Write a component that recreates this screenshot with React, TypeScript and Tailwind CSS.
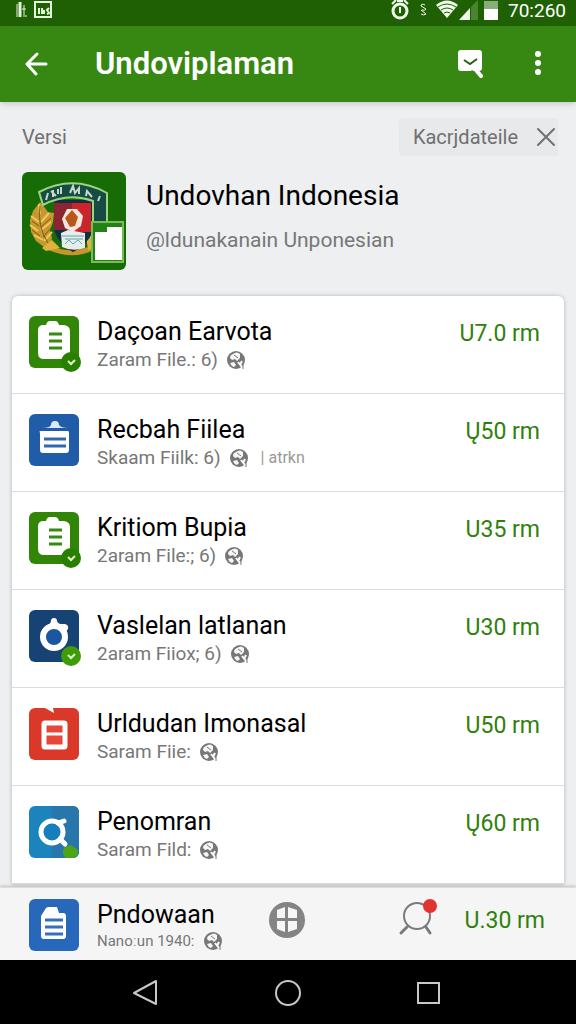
import type { ReactNode } from 'react'

const CLIPBOARD = (
  <>
    <path fill="#fff" d="M13 9h4q1-4 4-4h5q3 0 4 4h5q6 1 6 6v22q0 6-6 6H15q-6 0-6-6V14q0-4 4-5z" />
    <path stroke="#358a10" strokeWidth="3" d="M20 18h13M20 25h13M20 32h13" />
  </>
)

interface Item {
  title: string
  meta: string
  extra?: string
  price: string
  tile: string
  badge?: string
  art: ReactNode
}

const items: Item[] = [
  { title: 'Daçoan Earvota', meta: 'Zaram File.: 6)', price: 'U7.0 rm', tile: 'bg-[#318608]', badge: 'bg-[#298000]', art: CLIPBOARD },
  {
    title: 'Recbah Fiilea',
    meta: 'Skaam Fiilk: 6)',
    extra: '| atrkn',
    price: 'Ų50 rm',
    tile: 'bg-[#215ca8]',
    art: (
      <>
        <path fill="#d9e8fa" d="M13 14q8 0 9-3 0-4 4-4t4 4q2 3 9 3z" />
        <path fill="#fff" d="M11 17h28q1 0 1 2v17q0 3-3 3H14q-3 0-3-3V19q-1-2 0-2z" />
        <path stroke="#3168b1" strokeWidth="3" d="M15 25h22M15 32h22" />
      </>
    ),
  },
  { title: 'Kritiom Bupia', meta: '2aram File:; 6)', price: 'U35 rm', tile: 'bg-[#318608]', badge: 'bg-[#298000]', art: CLIPBOARD },
  {
    title: 'Vaslelan latlanan',
    meta: '2aram Fiiox; 6)',
    price: 'U30 rm',
    tile: 'bg-[#164274]',
    badge: 'bg-[#409b08]',
    art: (
      <>
        <circle cx="25" cy="27" r="11" fill="#1b57a0" stroke="#fff" strokeWidth="6" />
        <path fill="#fff" d="M17 17q4-2 5-6 0-3 3-3t3 3q1 3 4 3h4q4 1 3 5-2 4-5 3l-8-4z" />
      </>
    ),
  },
  {
    title: 'Urldudan Imonasal',
    meta: 'Saram Fiie:',
    price: 'U50 rm',
    tile: 'bg-[#da3828]',
    art: (
      <>
        <path fill="#fff" d="M16 0h8l1 5z" />
        <rect x="15" y="15" width="21" height="24" rx="1" fill="#e84636" stroke="#fff" strokeWidth="5" />
        <path stroke="#fff" strokeWidth="3" d="M15 26h21" />
      </>
    ),
  },
  {
    title: 'Penomran',
    meta: 'Saram Fild:',
    price: 'Ų60 rm',
    tile: 'bg-[#1c83bd]',
    art: (
      <>
        <path fill="#2876ac" d="M23 0h27v52H23z" />
        <path fill="#4da414" d="m36 41 6-2 7 5v4l-3 4h-9q-4-3-3-8z" />
        <circle cx="23" cy="26" r="11" fill="#157ebd" stroke="#fff" strokeWidth="5" />
        <path stroke="#fff" strokeWidth="5" strokeLinecap="round" d="m29 17 6-2M31 33l5 5" />
      </>
    ),
  },
]

function Tile({ color, badge, children }: { color: string; badge?: string; children: ReactNode }) {
  return (
    <div className={`relative h-[52px] w-[50px] shrink-0 rounded-md ${color}`}>
      <svg viewBox="0 0 50 52" className="h-full w-full rounded-md" fill="none" aria-hidden="true">
        {children}
      </svg>
      {badge && (
        <span className={`absolute -bottom-1 -right-0.5 flex h-5 w-5 items-center justify-center rounded-full ${badge}`}>
          <svg viewBox="0 0 20 20" className="h-5 w-5" fill="none" stroke="#dcf6c8" strokeWidth="2" aria-hidden="true">
            <path d="m7 9 3 3 4-4" />
          </svg>
        </span>
      )}
    </div>
  )
}

function Globe() {
  return (
    <svg viewBox="0 0 20 20" className="h-5 w-5 shrink-0" fill="none" aria-hidden="true">
      <circle cx="10" cy="10" r="9" fill="#777" />
      <path fill="#f6f6f6" d="M7 4q4-3 7 0v4l-3 3-2-2-3 1-2-2q0-3 3-4zM4 13l4-1 2 3-2 2q-3-1-4-4z" />
      <path stroke="#fff" strokeWidth="2" d="m12 12 4 5M16 11l-2 4" />
      <path stroke="#777" strokeWidth="1" d="m8 5 4 3M17 14v5" />
    </svg>
  )
}

function StatusBar() {
  return (
    <div className="flex h-[26px] items-start bg-[#206004] pl-4 pr-2.5 text-white">
      <svg viewBox="0 0 38 20" className="h-5 w-[38px]" fill="none" stroke="#e5f5dc" aria-hidden="true">
        <path strokeWidth="1" d="M1 4v13M8 5v12M6 9h4M10 15v2" />
        <path strokeWidth="3" d="M4 2v15" />
        <path strokeWidth="2" d="M19 2h16v15H19z" />
        <path strokeWidth="2" d="M23 8v6M26 8v6M28 10v4M33 8l-2 2 2 3-2 1" />
      </svg>
      <div className="ml-auto flex items-center">
        <svg viewBox="0 0 110 22" className="h-[22px] w-[110px]" fill="none" stroke="#f2faed" aria-hidden="true">
          <circle cx="12" cy="11" r="7" strokeWidth="3" />
          <path strokeWidth="2" d="M4 4 8 0M16 0l4 4M12 7v6M9 1h6" />
          <path strokeWidth="1" d="M37 5q-4-2-4 1l5 3q-1 2-4 1M33 10l5 4q-2 2-5 0" />
          <path fill="#f2faed" stroke="none" d="M48 5q11-9 22 0L59 18z" />
          <path stroke="#206004" strokeWidth="1" d="M50 7q9-6 18 0M53 10q6-4 12 0M56 13q3-2 6 0" />
          <path fill="#f2faed" stroke="none" d="M71 20 82 8v12z" />
          <path fill="#47862e" stroke="none" d="M83 7 90 0v20h-7z" />
          <path fill="#88ad79" stroke="none" d="M96 1h14v8H96z" />
          <path fill="#fff" stroke="none" d="M96 9h14v11H96z" />
        </svg>
        <span className="ml-2.5 text-[19px] leading-[22px]">70:260</span>
      </div>
    </div>
  )
}

function AppBar() {
  return (
    <header className="z-10 flex h-[76px] items-center bg-[#378812] pl-6 pr-7 text-white shadow-md">
      <button type="button" aria-label="Back" className="h-6 w-6">
        <svg viewBox="0 0 24 24" fill="none" stroke="currentColor" strokeWidth="3" strokeLinecap="round" strokeLinejoin="round">
          <path d="M13 2 3 12l9 10M4 12h18" />
        </svg>
      </button>
      <h1 className="ml-[47px] text-[31px] font-semibold leading-9">Undoviplaman</h1>
      <button type="button" aria-label="Review" className="ml-auto h-7 w-7">
        <svg viewBox="0 0 28 28" fill="none">
          <path fill="#fff" d="M5 0h18q3 0 3 3v15q0 3-3 3H5q-3 0-3-3V3q0-3 3-3z" />
          <path stroke="#378812" strokeWidth="3" d="m15 21 5 5" />
          <path stroke="#fff" strokeWidth="4" strokeLinecap="round" d="m20 20 5 6" />
          <path stroke="#275e14" strokeWidth="2" d="m8 10 6 4 7-5" />
        </svg>
      </button>
      <button type="button" aria-label="More options" className="ml-10 h-7 w-6">
        <svg viewBox="0 0 24 28" fill="currentColor">
          <circle cx="14" cy="4" r="3" />
          <circle cx="14" cy="13" r="3" />
          <circle cx="14" cy="22" r="3" />
        </svg>
      </button>
    </header>
  )
}

function Emblem() {
  return (
    <svg viewBox="0 0 104 98" className="h-[98px] w-[104px] shrink-0 rounded-md" fill="none" aria-hidden="true">
      <path fill="#176c05" d="M0 0h104v98H0z" />
      {/* wreath */}
      <path fill="#c7982f" d="m18 30 5 6 3 4 6 1-1 9-3 8 2 8-2 8-6 1-8-6-5-9-1-12 3-9z" />
      <path stroke="#f0c95c" strokeWidth="2" d="m17 32 1 10M9 44l8 6M8 53l8 6M12 63l9 5M27 41l-8 9M29 50l-10 8M30 60l-8 9" />
      <path stroke="#7a5f14" strokeWidth="1" d="M18 34q-3 20 8 37M10 49l7 5M10 58l8 6M29 46l-10 9M29 56l-8 9" />
      <path stroke="#c7952a" strokeWidth="5" strokeLinecap="round" d="M28 76q24 10 44-1" />
      <path fill="#dfb33d" d="m20 76 10-8 8 8-14 3zM64 64l6-3 5 14-9 3z" />
      {/* shield */}
      <path fill="#102f43" d="M32 28h39v32q-8 15-20 20-14-7-19-22z" />
      <path fill="#8d2432" d="M32 31h18v27H32z" />
      <path fill="#cb242b" d="M50 31h19v29H50z" />
      <path fill="#f3e6db" d="M45 37h10l6 7-2 10-8 6-8-4-3-9z" />
      <path fill="#b85719" d="m50 38 6 7-3 9-5 1-5-9z" />
      <path fill="#e8edea" d="m39 61 7-3 17 3v15q-12 4-23-1z" />
      <path stroke="#5aa8ad" strokeWidth="1" d="M40 64h22M43 67h18M43 72l4-4 4 4 5-4 4 4" />
      {/* ribbon */}
      <path fill="#174c45" stroke="#9bd57c" strokeWidth="2" d="M17 20q34-18 68 1v31H71V29Q46 20 21 33z" />
      <path stroke="#c4d9ce" strokeWidth="2" d="m24 28 2-7M31 25v-7M29 19l5 5M39 22v-7M36 17v5M48 21l3-7 2 7 4-5v6M64 24l1-5 5 6M76 29l2-5" />
      <path fill="#268018" stroke="#75bd57" strokeWidth="2" d="M70 50h31v40H70z" />
      <path fill="#fff" d="M73 60h12v-5h15v33H73z" />
    </svg>
  )
}

function ProfileHeader() {
  return (
    <section className="pb-[26px] pl-[22px] pr-[18px] pt-4">
      <div className="flex items-center justify-between text-xl leading-[38px] text-[#707070]">
        <span>Versi</span>
        <div className="flex items-center rounded bg-[#e8e9ea] pl-3.5">
          <button type="button">Kacrjdateile</button>
          <button type="button" aria-label="Clear" className="ml-4 h-6 w-6">
            <svg viewBox="0 0 24 24" fill="none" stroke="currentColor" strokeWidth="2" strokeLinecap="round">
              <path d="m4 4 16 16M20 4 4 20" />
            </svg>
          </button>
        </div>
      </div>
      <div className="mt-4 flex">
        <Emblem />
        <div className="ml-5 pt-1.5">
          <h2 className="whitespace-nowrap text-[28px] leading-9 text-black">Undovhan Indonesia</h2>
          <p className="mt-3 whitespace-nowrap text-[21px] leading-7 text-[#777]">@ldunakanain Unponesian</p>
        </div>
      </div>
    </section>
  )
}

function ItemRow({ item }: { item: Item }) {
  return (
    <li className="flex items-start border-b border-[#dcdcdc] pb-[21px] pl-[17px] pr-6 pt-5">
      <Tile color={item.tile} badge={item.badge}>
        {item.art}
      </Tile>
      <div className="ml-[18px] min-w-0 flex-1">
        <h3 className="whitespace-nowrap text-[25px] leading-8 text-black">{item.title}</h3>
        <p className="flex items-center gap-2 whitespace-nowrap text-[19px] leading-6 text-[#777]">
          {item.meta}
          <Globe />
          {item.extra && <span className="ml-1 text-base leading-6 text-[#999]">{item.extra}</span>}
        </p>
      </div>
      <span className="whitespace-nowrap text-[23px] leading-9 text-[#2f800c]">{item.price}</span>
    </li>
  )
}

function BottomBar() {
  return (
    <footer className="z-10 flex h-[73px] items-start border-t border-[#ddd] bg-[#f5f5f6] pl-[29px] pr-[31px] pt-[11px] shadow-[0_-1px_3px_rgba(0,0,0,0.2)]">
      <Tile color="bg-[#2868ba]">
        <path fill="#fff" d="m12 17 5-8q1-1 3-1h8l2 6h4q3 0 3 3v20q0 3-3 3H15q-3 0-3-3z" />
        <path stroke="#3470bc" strokeWidth="3" d="M16 21h18M16 28h18M16 35h18" />
      </Tile>
      <div className="ml-[18px] w-[171px]">
        <h3 className="whitespace-nowrap text-[25px] leading-8 text-black">Pndowaan</h3>
        <p className="flex items-center gap-2 whitespace-nowrap text-[15px] leading-5 text-[#777]">
          Nanoːun 1940:
          <Globe />
        </p>
      </div>
      <button type="button" aria-label="Add" className="mt-0.5 h-[38px] w-[38px]">
        <svg viewBox="0 0 38 38" fill="none">
          <circle cx="19" cy="19" r="18" fill="#848484" />
          <path fill="#f6f6f6" d="m9 9 8-3v11H9zM20 6l9 3v8h-9zM9 20h8v11l-8-3zM20 20h9v8l-9 3z" />
        </svg>
      </button>
      <button type="button" aria-label="Search" className="ml-auto h-10 w-10">
        <svg viewBox="0 0 40 40" fill="none" stroke="#7a7a7a">
          <circle cx="20" cy="17" r="13" strokeWidth="2" />
          <path strokeWidth="3" strokeLinecap="round" d="m10 28-6 6M29 28l4 6" />
          <circle cx="33" cy="7" r="7" fill="#e13431" stroke="none" />
        </svg>
      </button>
      <span className="ml-7 whitespace-nowrap text-[23px] leading-[44px] text-[#2f800c]">U.30 rm</span>
    </footer>
  )
}

function NavBar() {
  return (
    <nav className="flex h-16 items-center justify-center gap-[113px] bg-black text-[#c8c8c8]">
      <button type="button" aria-label="Back" className="h-7 w-7">
        <svg viewBox="0 0 28 28" fill="none" stroke="currentColor" strokeWidth="2" strokeLinejoin="round">
          <path d="M23 3v23L1 15z" />
        </svg>
      </button>
      <button type="button" aria-label="Home" className="h-7 w-7">
        <svg viewBox="0 0 28 28" fill="none" stroke="currentColor" strokeWidth="2">
          <circle cx="14" cy="15" r="12" />
        </svg>
      </button>
      <button type="button" aria-label="Recent apps" className="h-7 w-7">
        <svg viewBox="0 0 28 28" fill="none" stroke="currentColor" strokeWidth="2">
          <path d="M3 5h21v20H3z" />
        </svg>
      </button>
    </nav>
  )
}

export default function App() {
  return (
    <div className="flex min-h-screen flex-col bg-[#eeeff0] font-['Roboto',sans-serif]">
      <StatusBar />
      <AppBar />
      <main className="flex-1">
        <ProfileHeader />
        <ul className="mx-3 rounded-t-md bg-white shadow-[0_0_4px_rgba(0,0,0,0.25)]">
          {items.map((item) => (
            <ItemRow key={item.title} item={item} />
          ))}
        </ul>
      </main>
      <BottomBar />
      <NavBar />
    </div>
  )
}
